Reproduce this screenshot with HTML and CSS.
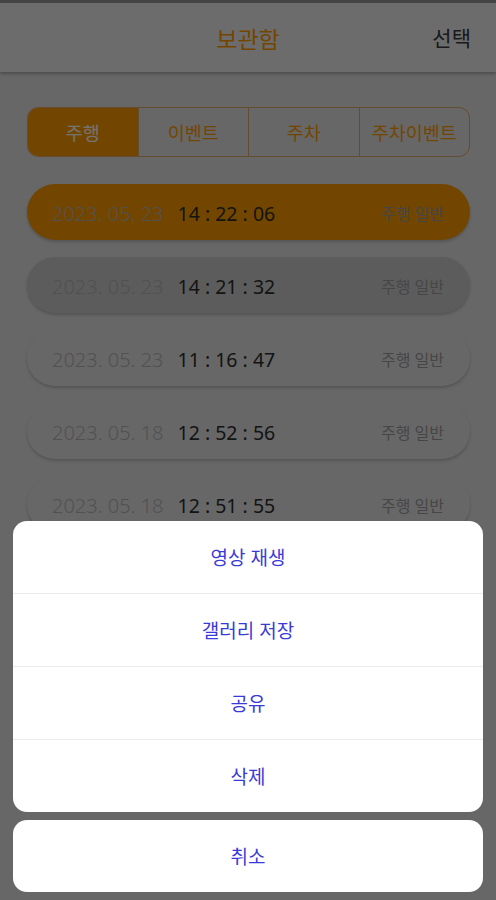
FILE: index.html
```html
<!DOCTYPE html>
<html lang="ko">
<head>
    <meta charset="UTF-8">
    <meta name="viewport" content="width=device-width, initial-scale=1.0">
    <title>보관함</title>
    <link rel="stylesheet" href="styles.css">
</head>
<body>
    <div class="statusbar"></div>
    <header class="topbar">
        <h1 class="title">보관함</h1>
        <span class="select">선택</span>
    </header>

    <main class="content">
        <div class="tabs">
            <div class="tab active">주행</div>
            <div class="tab">이벤트</div>
            <div class="tab">주차</div>
            <div class="tab">주차이벤트</div>
        </div>

        <ul class="records">
            <li class="record current"><span class="date">2023. 05. 23</span><span class="time">14 : 22 : 06</span><span class="kind">주행 일반</span></li>
            <li class="record pressed"><span class="date">2023. 05. 23</span><span class="time">14 : 21 : 32</span><span class="kind">주행 일반</span></li>
            <li class="record"><span class="date">2023. 05. 23</span><span class="time">11 : 16 : 47</span><span class="kind">주행 일반</span></li>
            <li class="record"><span class="date">2023. 05. 18</span><span class="time">12 : 52 : 56</span><span class="kind">주행 일반</span></li>
            <li class="record"><span class="date">2023. 05. 18</span><span class="time">12 : 51 : 55</span><span class="kind">주행 일반</span></li>
        </ul>
    </main>

    <div class="dim"></div>

    <div class="sheet">
        <div class="sheet-group">
            <button class="sheet-item">영상 재생</button>
            <button class="sheet-item">갤러리 저장</button>
            <button class="sheet-item">공유</button>
            <button class="sheet-item">삭제</button>
        </div>
        <div class="sheet-group">
            <button class="sheet-item">취소</button>
        </div>
    </div>
</body>
</html>
```

FILE: styles.css
```css
html, body { margin: 0; padding: 0; }
body { width: 496px; height: 900px; overflow: hidden; position: relative; background: #e4e4e4; font-family: "Noto Sans", "Noto Sans CJK KR", sans-serif; color: #333; }

.statusbar { height: 3px; background: #979797; }
.topbar { height: 69px; background: #f0f0f0; box-shadow: 0 2px 3px rgba(0,0,0,0.25); display: flex; align-items: center; justify-content: center; position: relative; }
.title { margin: 0; font-size: 23px; font-weight: 400; color: #ff9c00; }
.select { position: absolute; right: 25px; top: 19px; font-size: 21px; color: #3a3a3a; }

.content { padding: 35px 26px 0 27px; }

.tabs { display: flex; height: 50px; border: 1px solid #e0a868; border-radius: 11px; overflow: hidden; box-sizing: border-box; }
.tab { flex: 1; display: flex; align-items: center; justify-content: center; font-size: 18.5px; color: #ff9c00; border-left: 1px solid #e0a868; }
.tab:first-child { border-left: none; }
.tab.active { background: #ff9c00; color: #fff; }

.records { list-style: none; margin: 27px 0 0; padding: 0; display: flex; flex-direction: column; gap: 17px; }
.record { height: 56px; border-radius: 28px; display: flex; align-items: center; padding: 2px 26px 0 25px; box-sizing: border-box; box-shadow: 0 2px 3px rgba(0,0,0,0.18); font-size: 19px; }
.record.current { background: #ff9c00; }
.record.pressed { background: #cccccc; }
.date { color: #b4b4b4; font-weight: 300; font-size: 20px; }
.time { margin-left: 14px; color: #2e2e2e; font-size: 19.5px; }
.kind { margin-left: auto; color: #9c9c9c; font-size: 16px; }

.dim { position: absolute; inset: 0; background: rgba(0,0,0,0.55); }

.sheet { position: absolute; left: 13px; right: 13px; bottom: 8px; display: flex; flex-direction: column; gap: 8px; }
.sheet-group { background: #fff; border-radius: 14px; overflow: hidden; display: flex; flex-direction: column; }
.sheet-item { height: 73px; border: none; background: none; border-top: 1px solid #ebebeb; font-family: inherit; font-size: 19px; color: #3a3ad8; padding: 0; }
.sheet-item:first-child { border-top: none; height: 72px; }
```
